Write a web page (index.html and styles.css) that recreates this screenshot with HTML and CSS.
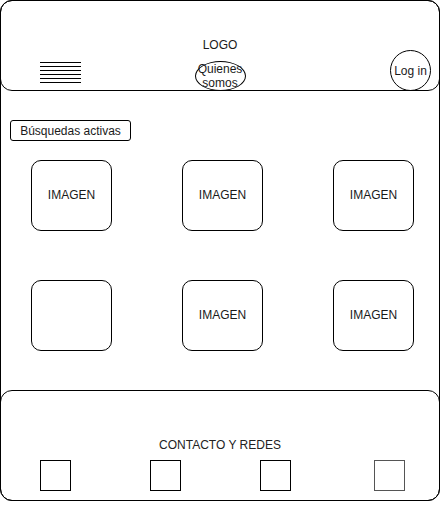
FILE: index.html
```html
<!DOCTYPE html>
<html lang="es">
<head>
<meta charset="utf-8">
<title>Wireframe</title>
<link rel="stylesheet" href="styles.css">
</head>
<body>
<div class="page">
  <header class="header">
    <div class="logo">LOGO</div>
    <div class="nav">
      <div class="nav-left"><div class="hamburger"></div></div>
      <div class="ellipse">Quienes<br>somos</div>
      <div class="nav-right"><div class="circle">Log in</div></div>
    </div>
  </header>
  <main class="main">
    <div class="btn">Búsquedas activas</div>
    <div class="grid">
      <div class="card">IMAGEN</div>
      <div class="card">IMAGEN</div>
      <div class="card">IMAGEN</div>
      <div class="card"></div>
      <div class="card">IMAGEN</div>
      <div class="card">IMAGEN</div>
    </div>
  </main>
  <footer class="footer">
    <div class="footer-title">CONTACTO Y REDES</div>
    <div class="socials">
      <div class="sq"></div>
      <div class="sq"></div>
      <div class="sq"></div>
      <div class="sq sq-gray"></div>
    </div>
  </footer>
</div>
</body>
</html>
```

FILE: styles.css
```css
* { box-sizing: border-box; }
html, body { margin: 0; padding: 0; background: #fff; }
body {
  font-family: "Liberation Sans", Arial, sans-serif;
  font-size: 12px;
  color: #1a1a1a;
}
.page {
  width: 440px;
  height: 501px;
  border: 1px solid #000;
  border-radius: 12px;
  display: flex;
  flex-direction: column;
}
.header {
  margin: -1px -1px 0;
  height: 91px;
  border: 1px solid #000;
  border-radius: 12px;
  padding-top: 37px;
  display: flex;
  flex-direction: column;
}
.logo {
  text-align: center;
  line-height: 14px;
  height: 14px;
  margin-bottom: -2px;
}
.nav {
  height: 40px;
  display: grid;
  grid-template-columns: 1fr auto 1fr;
  align-items: end;
}
.nav-left { padding-left: 39px; display: flex; }
.hamburger {
  width: 41px;
  height: 21px;
  margin-bottom: 7px;
  background: repeating-linear-gradient(to bottom, #000 0, #000 1px, transparent 1px, transparent 4px);
}
.ellipse {
  width: 51px;
  height: 30px;
  border: 1px solid #000;
  border-radius: 50%;
  display: flex;
  align-items: center;
  justify-content: center;
  text-align: center;
  line-height: 14px;
  white-space: nowrap;
  margin-bottom: -1px;
}
.nav-right { display: flex; justify-content: flex-end; padding-right: 8px; }
.circle {
  width: 41px;
  height: 41px;
  border: 1px solid #000;
  border-radius: 50%;
  display: flex;
  align-items: center;
  justify-content: center;
  margin-bottom: -1px;
}
.main {
  flex: 1;
  padding: 29px 25px 0 9px;
}
.btn {
  width: 121px;
  height: 21px;
  border: 1px solid #000;
  border-radius: 3px;
  display: flex;
  align-items: center;
  justify-content: center;
}
.grid {
  margin-top: 19px;
  padding-left: 21px;
  display: grid;
  grid-template-columns: repeat(3, 81px);
  justify-content: space-between;
  row-gap: 49px;
}
.card {
  height: 71px;
  border: 1px solid #000;
  border-radius: 10px;
  display: flex;
  align-items: center;
  justify-content: center;
  padding-bottom: 1px;
}
.footer {
  margin: 0 -1px -1px;
  height: 111px;
  border: 1px solid #000;
  border-radius: 12px;
  padding: 47px 34px 0 39px;
}
.footer-title {
  text-align: center;
  line-height: 14px;
  margin-left: -38px;
  margin-right: -33px;
  color: #222;
}
.socials {
  margin-top: 8px;
  display: flex;
  gap: 79px;
}
.sq {
  width: 31px;
  height: 31px;
  border: 1px solid #000;
}
.sq-gray { border-color: #555; margin-left: auto; }
```
